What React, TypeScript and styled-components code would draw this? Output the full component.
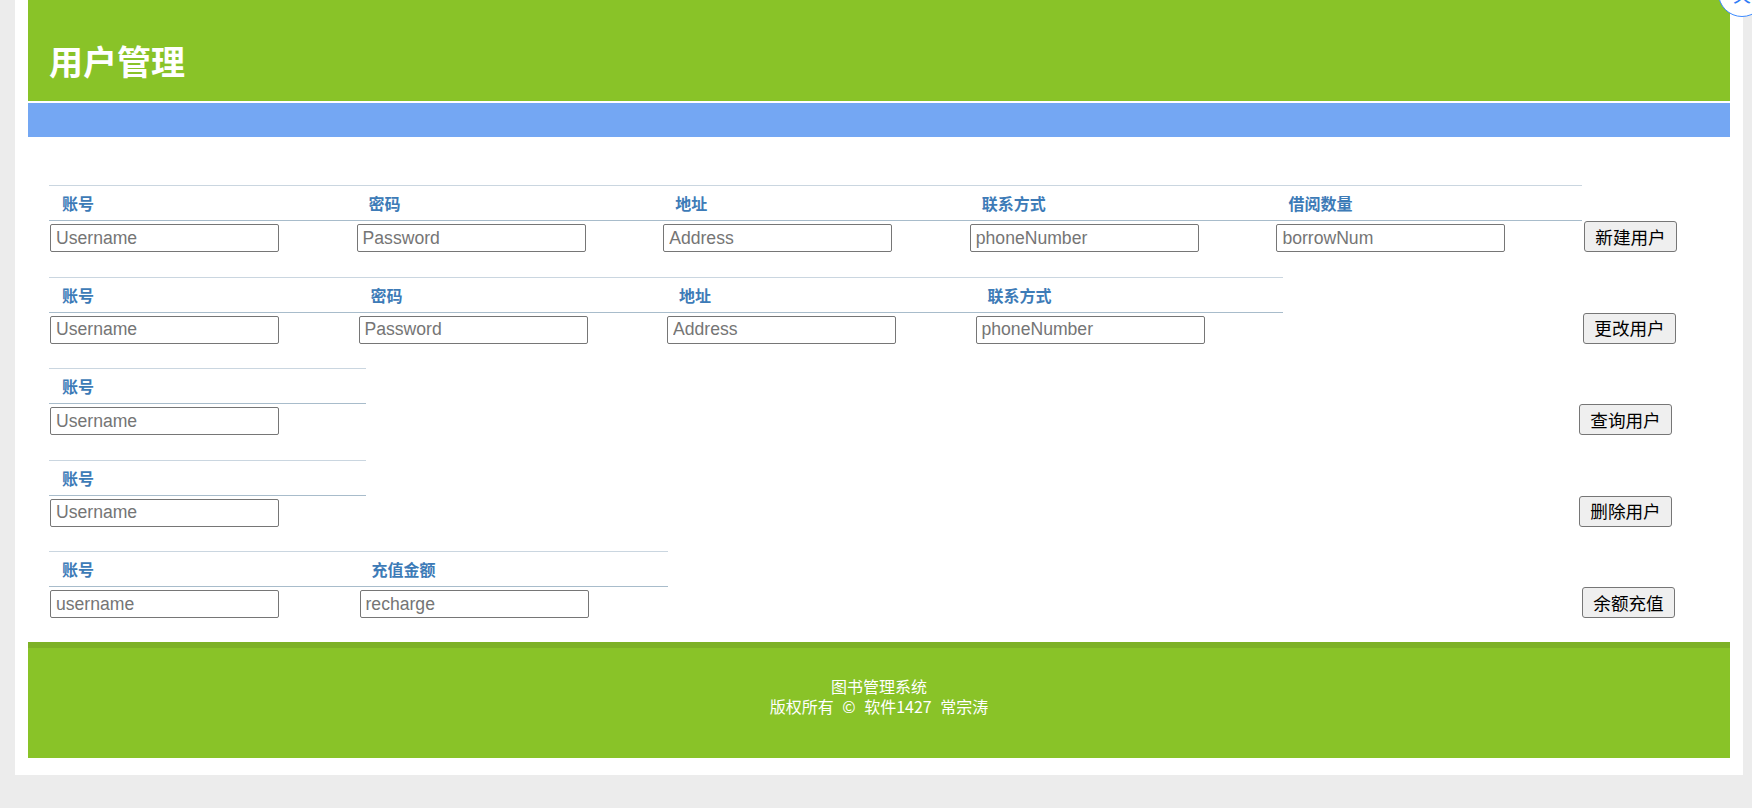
import React from "react";
import styled, { createGlobalStyle } from "styled-components";

const GlobalStyle = createGlobalStyle`
  html, body { margin: 0; padding: 0; }
  body {
    background: #ececec;
    font-family: "Noto Sans CJK SC", "Liberation Sans", sans-serif;
  }
`;

const Page = styled.div`
  margin-left: 15px;
  width: 1728px;
  box-sizing: border-box;
  background: #ffffff;
  padding: 0 13px 17px;
`;

const Header = styled.header`
  height: 101px;
  background: #89c328;
  display: flex;
  align-items: center;
  box-sizing: border-box;
  padding: 21px 0 0 21px;
`;

const Title = styled.h1`
  margin: 0;
  color: #ffffff;
  font-family: "Noto Sans CJK SC", sans-serif;
  font-size: 34px;
  font-weight: 700;
  line-height: 1;
  letter-spacing: 0;
`;

const SubBar = styled.div`
  margin-top: 2px;
  height: 34px;
  background: #74a7f3;
`;

const Content = styled.main`
  padding: 48px 0 24px 21px;
  display: flex;
  flex-direction: column;
  gap: 24.5px;
`;

const FormRow = styled.section`
  display: grid;
  grid-template-columns: 1530px auto;
  align-items: end;
`;

const FieldTable = styled.div<{ $cols: number; $colWidth: number }>`
  display: grid;
  grid-template-columns: repeat(${(p) => p.$cols}, ${(p) => p.$colWidth}px);
`;

const HeadCell = styled.div`
  height: 34px;
  border-top: 1px solid #cad6e0;
  border-bottom: 1px solid #a8bccb;
  display: flex;
  align-items: center;
  padding-left: 13px;
  color: #3d7bb7;
  font-family: "Noto Sans CJK SC", sans-serif;
  font-size: 16px;
  font-weight: 700;
`;

const InputCell = styled.div`
  padding: 3px 0 0 1px;
`;

const TextInput = styled.input`
  box-sizing: border-box;
  display: block;
  width: 229px;
  height: 28px;
  margin: 0;
  padding: 0 5px;
  border: 1px solid #767676;
  border-radius: 2px;
  background: #ffffff;
  font-family: "Liberation Sans", Arial, sans-serif;
  font-size: 17.6px;
  color: #222;
  outline: none;
  &::placeholder {
    color: #757575;
  }
`;

const ActionButton = styled.button<{ $offset: number }>`
  box-sizing: border-box;
  width: 93px;
  height: 31px;
  margin: 0 0 0 ${(p) => p.$offset}px;
  padding: 0;
  border: 1px solid #767676;
  border-radius: 3px;
  background: #efefef;
  color: #000;
  font-family: "Noto Sans CJK SC", sans-serif;
  font-size: 17.6px;
  line-height: 1;
  cursor: pointer;
`;

const Footer = styled.footer`
  height: 110px;
  border-top: 6px solid #7db126;
  background: #89c328;
  box-sizing: content-box;
  display: flex;
  flex-direction: column;
  align-items: center;
  padding-top: 29px;
  box-sizing: border-box;
  height: 116px;
`;

const FooterLine = styled.div<{ $spread?: number }>`
  color: #ffffff;
  font-family: "Noto Sans CJK SC", sans-serif;
  font-size: 16px;
  line-height: 19.5px;
  white-space: pre;
  word-spacing: ${(p) => p.$spread ?? 0}px;
  text-align: center;
`;

const FloatBadge = styled.div`
  position: absolute;
  left: 1718px;
  top: -31px;
  width: 48px;
  height: 48px;
  box-sizing: border-box;
  border-radius: 50%;
  border: 1.5px solid #3d8bff;
  background: #ffffff;
  display: flex;
  align-items: flex-end;
  justify-content: center;
  padding-bottom: 13px;
  color: #2f7df6;
  font-family: "Noto Sans CJK SC", sans-serif;
  font-size: 18px;
  line-height: 1;
`;

type Field = { label: string; placeholder: string };
type RowDef = { fields: Field[]; colWidth: number; action: string; offset: number };

const rows: RowDef[] = [
  {
    fields: [
      { label: "账号", placeholder: "Username" },
      { label: "密码", placeholder: "Password" },
      { label: "地址", placeholder: "Address" },
      { label: "联系方式", placeholder: "phoneNumber" },
      { label: "借阅数量", placeholder: "borrowNum" },
    ],
    colWidth: 306.6,
    action: "新建用户",
    offset: 5,
  },
  {
    fields: [
      { label: "账号", placeholder: "Username" },
      { label: "密码", placeholder: "Password" },
      { label: "地址", placeholder: "Address" },
      { label: "联系方式", placeholder: "phoneNumber" },
    ],
    colWidth: 308.5,
    action: "更改用户",
    offset: 4,
  },
  {
    fields: [{ label: "账号", placeholder: "Username" }],
    colWidth: 317,
    action: "查询用户",
    offset: 0,
  },
  {
    fields: [{ label: "账号", placeholder: "Username" }],
    colWidth: 317,
    action: "删除用户",
    offset: 0,
  },
  {
    fields: [
      { label: "账号", placeholder: "username" },
      { label: "充值金额", placeholder: "recharge" },
    ],
    colWidth: 309.5,
    action: "余额充值",
    offset: 3,
  },
];

export default function App() {
  return (
    <>
      <GlobalStyle />
      <Page>
        <Header>
          <Title>用户管理</Title>
        </Header>
        <SubBar />
        <Content>
          {rows.map((row, i) => (
            <FormRow key={i}>
              <FieldTable $cols={row.fields.length} $colWidth={row.colWidth}>
                {row.fields.map((f, j) => (
                  <HeadCell key={"h" + j}>{f.label}</HeadCell>
                ))}
                {row.fields.map((f, j) => (
                  <InputCell key={"i" + j}>
                    <TextInput type="text" placeholder={f.placeholder} />
                  </InputCell>
                ))}
              </FieldTable>
              <ActionButton $offset={row.offset}>{row.action}</ActionButton>
            </FormRow>
          ))}
        </Content>
        <Footer>
          <FooterLine>图书管理系统</FooterLine>
          <FooterLine $spread={5}>版权所有 © 软件1427 常宗涛</FooterLine>
        </Footer>
      </Page>
      <FloatBadge>关</FloatBadge>
    </>
  );
}
